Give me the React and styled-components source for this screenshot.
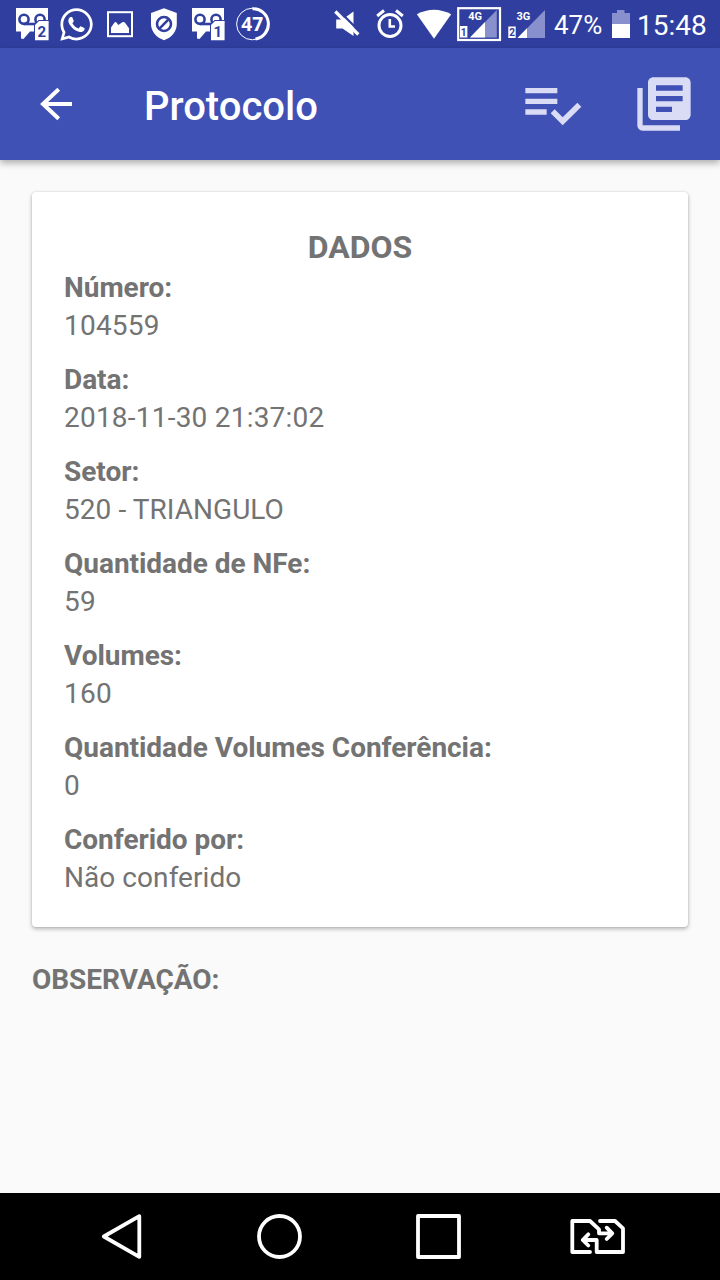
import styled, { createGlobalStyle } from "styled-components"
import { FaWhatsapp } from "react-icons/fa"

// The fields shown inside the card
const fields = [
    { label: "Número:", value: "104559" },
    { label: "Data:", value: "2018-11-30 21:37:02" },
    { label: "Setor:", value: "520 - TRIANGULO" },
    { label: "Quantidade de NFe:", value: "59" },
    { label: "Volumes:", value: "160" },
    { label: "Quantidade Volumes Conferência:", value: "0" },
    { label: "Conferido por:", value: "Não conferido" },
]

// Voicemail notification with the sim card number on it
const Voicemail = ({sim}) => (
    <StatusIcon viewBox="0 0 44 48">
        <path d="M6 8H38V31.5H20L13.5 39L11 38.5V31.5H6Z" fill="#fff" />
        <g fill="none" stroke="#303f9f" strokeWidth="2.6">
            <circle cx="14" cy="19.3" r="4.6" />
            <circle cx="30" cy="19.3" r="4.6" />
            <path d="M14 24H30" />
        </g>
        <path d="M29 21H38.6V40.3H25V25Z" fill="#fff" stroke="#303f9f" strokeWidth="2" paintOrder="stroke" />
        <SimText x="31.8" y="37" size={15}>{sim}</SimText>
    </StatusIcon>
)

const StatusLeft = () => (
    <Group>
        <Voicemail sim="2" />
        <Slot><FaWhatsapp size={37} /></Slot>
        <StatusIcon viewBox="0 0 44 48">
            <rect x="10" y="12.2" width="24" height="24" fill="none" stroke="#fff" strokeWidth="2" />
            <path d="M13 33V27.5L16.5 22.5Q17.5 21.3 18.7 22.8L20.3 25L24.3 22.3Q26 21.4 27.2 23L31 28.3V33Z" fill="#fff" />
        </StatusIcon>
        <StatusIcon viewBox="0 0 44 48">
            <path d="M22 8.3L34.8 13V24C34.8 31.5 29.5 37.5 22 40.3C14.5 37.5 9 31.5 9 24V13Z" fill="#fff" />
            <g fill="none" stroke="#303f9f" strokeWidth="2.6">
                <circle cx="22" cy="24" r="7" />
                <path d="M17.2 28.8L26.8 19.2" />
            </g>
        </StatusIcon>
        <Voicemail sim="1" />
        <StatusIcon viewBox="0 0 44 48">
            <g fill="none" stroke="#fff">
                <circle cx="22.4" cy="24" r="15.8" strokeWidth="1" />
                <path d="M22.4 8.8A15.2 15.2 0 0 1 25.5 39" strokeWidth="3" />
            </g>
            <RingText x="22.2" y="30.8">47</RingText>
        </StatusIcon>
    </Group>
)

const StatusRight = () => (
    <Group>
        <StatusIcon viewBox="0 0 44 48">
            <path d="M12.2 19.5H18.5L29.5 11.5V36L18.5 28.5H12.2Z" fill="#fff" />
            <path d="M13.6 9.5L36.6 32.5" stroke="#303f9f" strokeWidth="2.4" />
            <path d="M11.3 11.5L34.3 34.5" stroke="#fff" strokeWidth="3.2" />
        </StatusIcon>
        <StatusIcon viewBox="0 0 44 48">
            <g fill="none" stroke="#fff" strokeWidth="3">
                <circle cx="22" cy="25.5" r="11" />
                <path d="M21.8 19V26.5H27" strokeWidth="2.6" />
                <path d="M9.2 16L16 10.5M28 10.5L34.8 16" />
            </g>
        </StatusIcon>
        <StatusIcon viewBox="0 0 44 48">
            <path d="M4.8 14.3Q22 5 39.2 14.3L22 38.7Z" fill="#fff" />
        </StatusIcon>
        <StatusIcon viewBox="0 0 48 48" w={48}>
            <rect x="2.2" y="8.2" width="41.8" height="31.8" fill="none" stroke="#fff" strokeWidth="2.2" />
            <path d="M14 37.5H40.8V10Z" fill="#8990ce" />
            <path d="M14 37.5H29V22Z" fill="#fff" />
            <rect x="4" y="26" width="7.4" height="11.5" fill="#fff" />
            <SimText x="7.6" y="35.6" size={10}>1</SimText>
            <NetText x="12.3" y="19.8">4G</NetText>
        </StatusIcon>
        <StatusIcon viewBox="0 0 48 48" w={48}>
            <path d="M13.5 38H41V10Z" fill="#8990ce" />
            <path d="M13.5 38H23V28.3Z" fill="#fff" />
            <rect x="4.3" y="26.5" width="7.4" height="11.5" fill="#fff" />
            <SimText x="8" y="36" size={10}>2</SimText>
            <NetText x="12.4" y="19.8">3G</NetText>
        </StatusIcon>
        <Percent>47%</Percent>
        <Battery viewBox="0 0 18 28">
            <path d="M5 0H12.5V3H18V14H0V3H5Z" fill="#8990ce" />
            <rect y="14" width="18" height="14" fill="#fff" />
        </Battery>
        <Clock>15:48</Clock>
    </Group>
)

const Toolbar = () => (
    <Bar>
        <BackIcon viewBox="0 0 48 48">
            <path d="M26.7 9.3L11 24L26.7 38.7M10 24H40" fill="none" stroke="#fff" strokeWidth="4" />
        </BackIcon>
        <Title>Protocolo</Title>
        <ActionIcon viewBox="0 0 24 24">
            <path d="M14 10H2v2h12v-2zm0-4H2v2h12V6zM2 16h8v-2H2v2zm19.5-4.5L23 13l-6.99 7-4.51-4.5L13 14l3.01 3 5.49-5.5z" />
        </ActionIcon>
        <ActionIcon viewBox="0 0 24 24">
            <path d="M4 6H2v14c0 1.1.9 2 2 2h14v-2H4V6zm16-4H8c-1.1 0-2 .9-2 2v12c0 1.1.9 2 2 2h12c1.1 0 2-.9 2-2V4c0-1.1-.9-2-2-2zm-1 9H9V9h10v2zm-4 4H9v-2h6v2zm4-8H9V5h10v2z" />
        </ActionIcon>
    </Bar>
)

// Android navigation buttons
const Navigation = () => (
    <NavBar>
        <NavIcon viewBox="0 0 159 87">
            <path d="M62.8 43.5L98.3 23.2V63.8Z" />
        </NavIcon>
        <NavIcon viewBox="0 0 159 87">
            <circle cx="79.5" cy="43.5" r="20.5" />
        </NavIcon>
        <NavIcon viewBox="0 0 159 87">
            <rect x="59" y="23" width="41" height="41" />
        </NavIcon>
        <NavIcon viewBox="0 0 159 87">
            <path d="M72 59H54.3V28H72L81 36.3V40.3H93M88.7 34.7L94.3 40.3L88.7 46" />
            <path d="M82 28H97L105 35.3V59H78.7V47H66M70.3 41.3L64.7 47L70.3 52.5" />
        </NavIcon>
    </NavBar>
)

const App = () => {
    return (
        <Screen>
            <GlobalStyle />
            <StatusBar>
                <StatusLeft />
                <StatusRight />
            </StatusBar>
            <Toolbar />
            <Content>
                <Card>
                    <Heading>DADOS</Heading>
                    {fields.map(({label, value}) => (
                        <Field key={label}>
                            <Label>{label}</Label>
                            <Value numeric={/^[\d\s:-]+$/.test(value)}>{value}</Value>
                        </Field>
                    ))}
                </Card>
                <Label>OBSERVAÇÃO:</Label>
            </Content>
            <Navigation />
        </Screen>
    )
}

const GlobalStyle = createGlobalStyle`
    body {
        margin: 0;
        background-color: #fafafa;
        font-family: Roboto, "Liberation Sans", sans-serif;
    }

    svg {
        display: block;
        flex-shrink: 0;
    }
`

const Screen = styled.div`
    display: flex;
    flex-direction: column;
    width: 720px;
    height: 1280px;
    overflow: hidden;
    background-color: #fafafa;
`

const StatusBar = styled.div`
    display: flex;
    justify-content: space-between;
    height: 48px;
    padding: 0 12px 0 10px;
    background-color: #303f9f;
    color: white;
`

const Group = styled.div`
    display: flex;
    height: 48px;
`

const Slot = styled.div`
    display: flex;
    align-items: center;
    justify-content: center;
    width: 44px;
    height: 48px;
`

const StatusIcon = styled.svg`
    width: ${({w}) => w || 44}px;
    height: 48px;
`

const SimText = styled.text`
    font-size: ${({size}) => size}px;
    font-weight: bold;
    text-anchor: middle;
    fill: #303f9f;
`

const NetText = styled.text`
    font-size: 11px;
    font-weight: bold;
    fill: white;
`

const RingText = styled.text`
    font-family: "Open Sans", sans-serif;
    font-size: 19px;
    font-weight: bold;
    text-anchor: middle;
    fill: white;
`

const Percent = styled.div`
    width: 58px;
    padding-left: 2px;
    font-size: 26px;
    line-height: 51px;
`

const Battery = styled.svg`
    width: 18px;
    height: 28px;
    margin-top: 10px;
`

const Clock = styled.div`
    width: 71px;
    padding-left: 7px;
    font-size: 28px;
    line-height: 52px;
`

const Bar = styled.div`
    display: flex;
    align-items: center;
    position: relative;
    height: 112px;
    padding: 0 24px 0 32px;
    box-sizing: border-box;
    background-color: #3f51b5;
    box-shadow: 0 3px 7px rgba(0, 0, 0, 0.32);
`

const BackIcon = styled.svg`
    width: 48px;
    height: 48px;
`

const Title = styled.div`
    flex: 1;
    padding: 6px 0 0 64px;
    color: white;
    font-size: 40px;
    font-weight: 500;
    line-height: 48px;
`

const ActionIcon = styled.svg`
    width: 64px;
    height: 64px;
    fill: #d9dcf4;

    & + & {
        margin-left: 48px;
    }
`

const Content = styled.div`
    flex: 1;
    padding: 32px;
    color: #737373;
    font-size: 28px;
    line-height: 38px;
`

const Card = styled.div`
    height: 735px;
    padding: 32px;
    margin-bottom: 34px;
    box-sizing: border-box;
    background-color: white;
    border-radius: 4px;
    box-shadow: 0 2px 4px rgba(0, 0, 0, 0.28), 0 0 2px rgba(0, 0, 0, 0.14);
`

const Heading = styled.div`
    height: 45px;
    font-size: 32px;
    font-weight: bold;
    line-height: 46px;
    text-align: center;
`

const Field = styled.div`
    margin-bottom: 16px;
`

const Label = styled.div`
    font-weight: bold;
    letter-spacing: -0.03px;
`

const Value = styled.div`
    letter-spacing: ${({numeric}) => numeric ? 0.22 : 0.06}px;
`

const NavBar = styled.div`
    display: flex;
    height: 87px;
    padding-left: 41px;
    background-color: black;
`

const NavIcon = styled.svg`
    width: 159px;
    height: 87px;
    fill: none;
    stroke: white;
    stroke-width: 3.8;
    stroke-linejoin: round;
    stroke-linecap: round;
`

export default App
